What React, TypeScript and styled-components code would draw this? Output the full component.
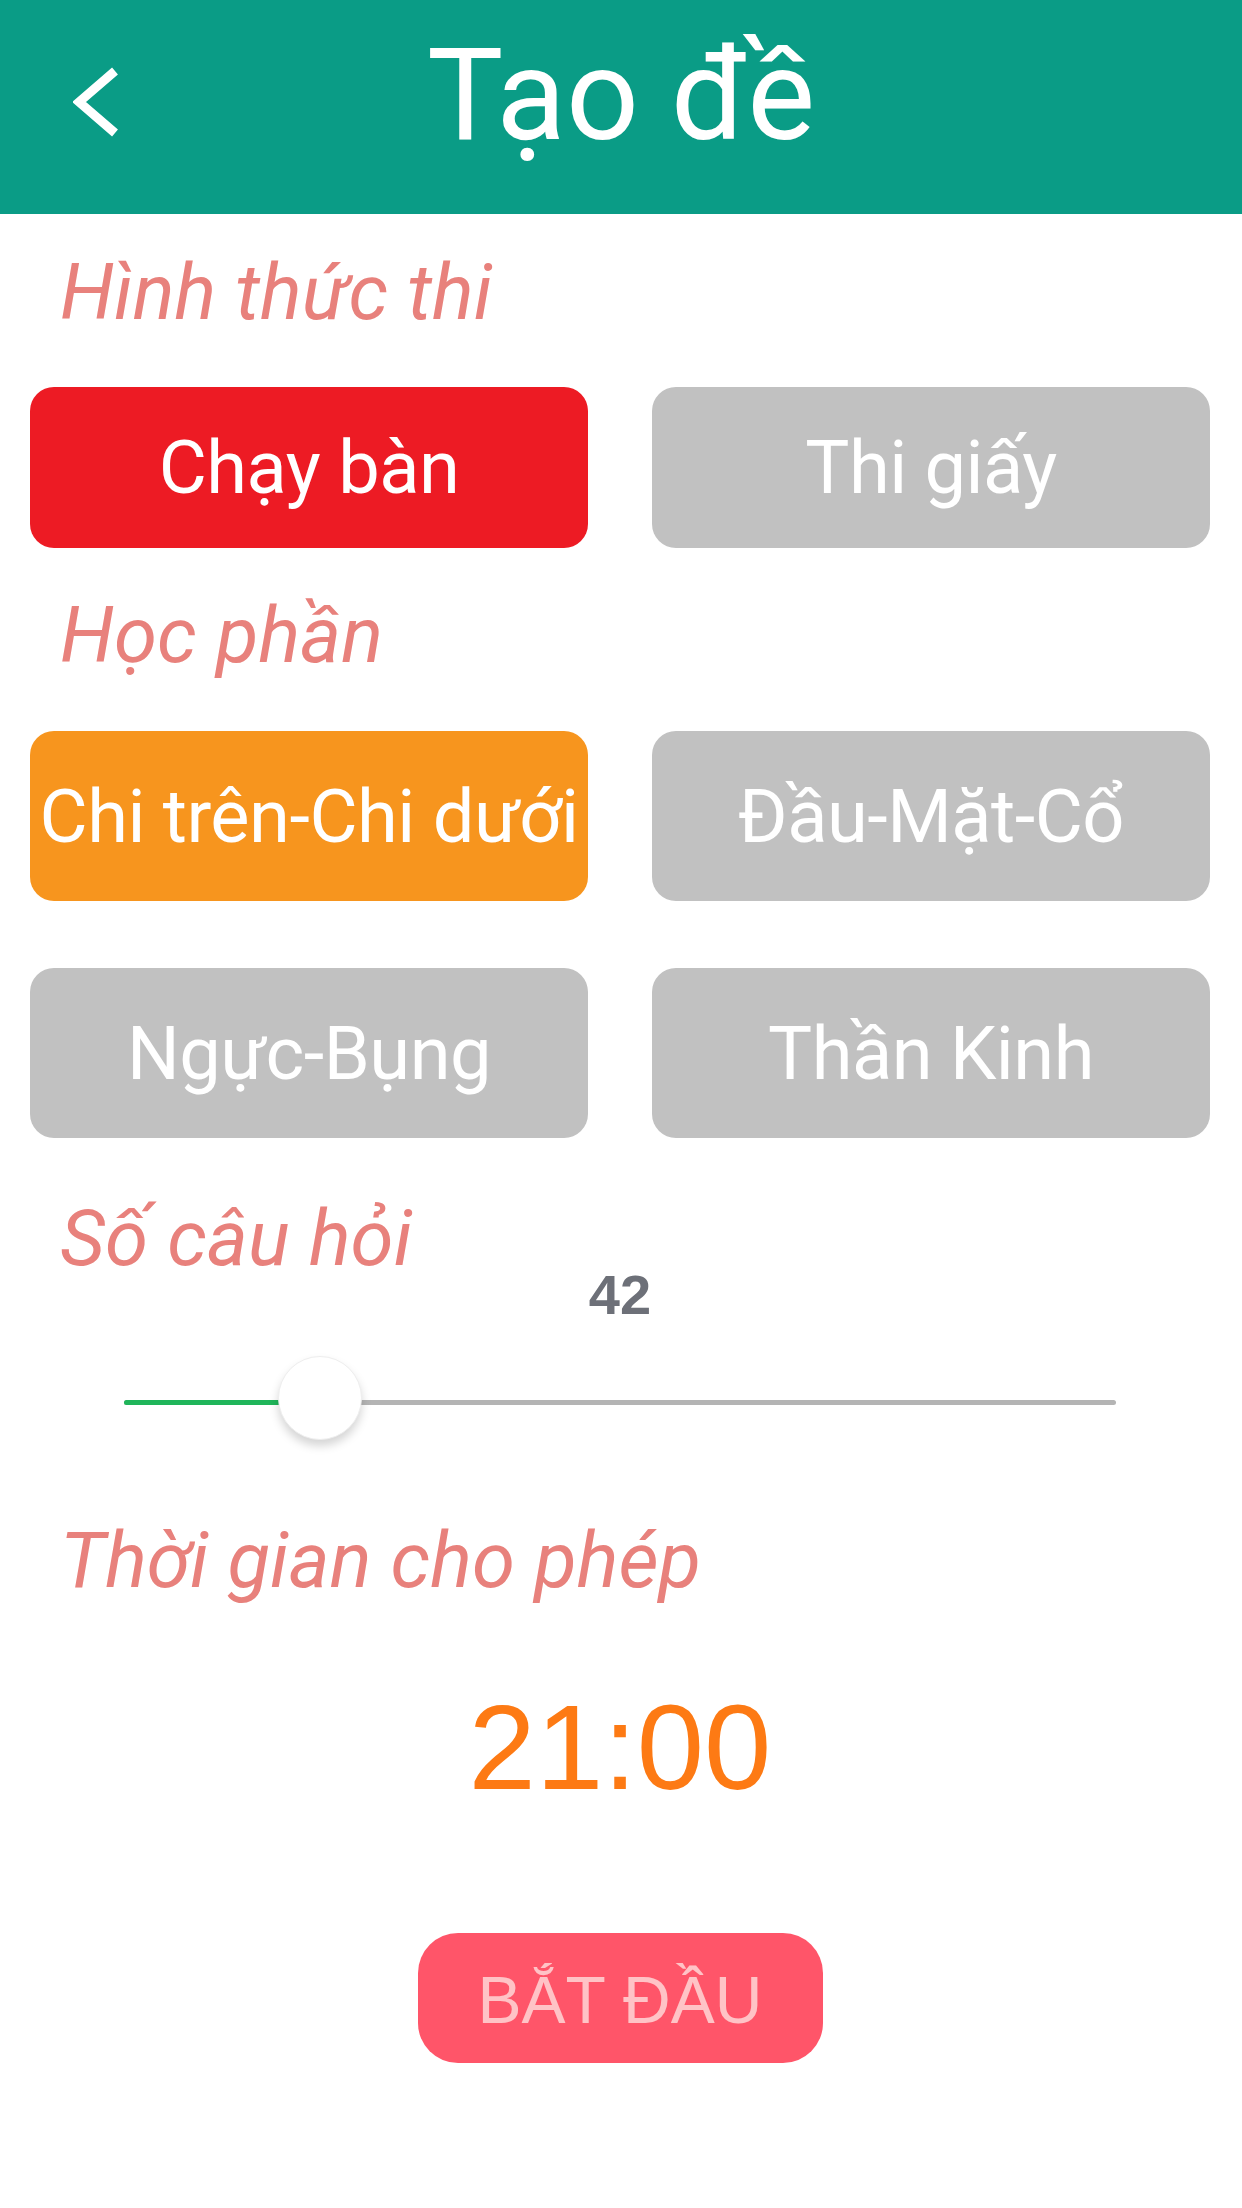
import React, { useState } from "react";
import styled, { createGlobalStyle } from "styled-components";

const GlobalStyle = createGlobalStyle`
  html, body {
    margin: 0;
    padding: 0;
    background: #ffffff;
  }
  body {
    font-family: Roboto, "Noto Sans", "Liberation Sans", sans-serif;
  }
  * {
    box-sizing: border-box;
  }
`;

type Tone = "red" | "orange" | "grey";

const toneColors: Record<Tone, string> = {
  red: "#ed1b24",
  orange: "#f7951e",
  grey: "#c1c1c1",
};

const Page = styled.div`
  width: 100%;
  min-height: 2208px;
  background: #ffffff;
`;

const Header = styled.header`
  height: 214px;
  background: #0a9c86;
  display: grid;
  grid-template-columns: 1fr auto 1fr;
  align-items: center;
  padding-bottom: 24px;
`;

const BackButton = styled.button`
  justify-self: start;
  margin: 14px 0 0 73px;
  padding: 0;
  border: none;
  background: transparent;
  display: flex;
  cursor: pointer;
`;

const Title = styled.h1`
  margin: 0;
  color: #ffffff;
  font-family: Roboto, "Noto Sans", sans-serif;
  font-weight: 400;
  font-size: 128px;
  line-height: 150px;
  white-space: nowrap;
`;

const Content = styled.main`
  padding: 0 32px 0 30px;
  display: flex;
  flex-direction: column;
`;

const SectionLabel = styled.h2<{ $top: number; $bottom: number }>`
  margin: ${(p) => p.$top}px 0 ${(p) => p.$bottom}px 30px;
  color: #e8817c;
  font-family: Roboto, "Noto Sans", sans-serif;
  font-style: italic;
  font-weight: 400;
  font-size: 78px;
  line-height: 96px;
  white-space: nowrap;
`;

const OptionGrid = styled.div<{ $rows: string; $rowGap: number }>`
  display: grid;
  grid-template-columns: 1fr 1fr;
  grid-template-rows: ${(p) => p.$rows};
  column-gap: 64px;
  row-gap: ${(p) => p.$rowGap}px;
`;

const OptionButton = styled.button<{ $tone: Tone }>`
  border: none;
  border-radius: 24px;
  background: ${(p) => toneColors[p.$tone]};
  color: #ffffff;
  font-family: Roboto, "Noto Sans", sans-serif;
  font-weight: 400;
  font-size: 74px;
  letter-spacing: -0.5px;
  white-space: nowrap;
  padding: 0;
  display: flex;
  align-items: center;
  justify-content: center;
  overflow: visible;
  cursor: pointer;
`;

const ValueLabel = styled.div`
  margin-top: -24px;
  text-align: center;
  color: #6d7078;
  font-family: "Liberation Sans", Arial, sans-serif;
  font-weight: 700;
  font-size: 56px;
  line-height: 64px;
`;

const SliderWrap = styled.div`
  position: relative;
  height: 84px;
  margin: 33px 94px 0 94px;
  display: flex;
  align-items: center;
`;

const Track = styled.div`
  position: relative;
  width: 100%;
  height: 5px;
  border-radius: 3px;
  background: #b4b4b4;
`;

const Fill = styled.div`
  height: 100%;
  border-radius: 3px;
  background: #20b55a;
`;

const Thumb = styled.div`
  position: absolute;
  top: -4px;
  width: 84px;
  height: 84px;
  margin-left: -42px;
  border-radius: 50%;
  background: #ffffff;
  border: 1px solid #eeeeee;
  box-shadow: 0 6px 10px rgba(0, 0, 0, 0.17);
`;

const TimeText = styled.div`
  margin-top: 72px;
  text-align: center;
  color: #fd7a14;
  font-family: "Liberation Sans", Arial, sans-serif;
  font-weight: 400;
  font-size: 121px;
  line-height: 132px;
`;

const StartButton = styled.button`
  align-self: center;
  margin-top: 120px;
  width: 405px;
  height: 130px;
  border: none;
  border-radius: 40px;
  background: #ff5569;
  color: #ffc3c6;
  font-family: "Liberation Sans", Arial, sans-serif;
  font-weight: 400;
  font-size: 66px;
  display: flex;
  align-items: center;
  justify-content: center;
  padding-top: 4px;
  cursor: pointer;
`;

const ChevronLeft = () => (
  <svg width="50" height="76" viewBox="0 0 50 76">
    <polyline
      points="42,7 6,38 42,69"
      fill="none"
      stroke="#ffffff"
      strokeWidth="9"
      strokeLinejoin="miter"
    />
  </svg>
);

const modes = ["Chạy bàn", "Thi giấy"];
const parts = ["Chi trên-Chi dưới", "Đầu-Mặt-Cổ", "Ngực-Bụng", "Thần Kinh"];

const MIN_Q = 10;
const MAX_Q = 172;

export default function App() {
  const [mode, setMode] = useState(0);
  const [part, setPart] = useState(0);
  const [questions] = useState(42);

  const percent = ((questions - MIN_Q) / (MAX_Q - MIN_Q)) * 100;

  return (
    <Page>
      <GlobalStyle />
      <Header>
        <BackButton aria-label="Quay lại">
          <ChevronLeft />
        </BackButton>
        <Title>Tạo đề</Title>
        <div />
      </Header>
      <Content>
        <SectionLabel $top={31} $bottom={46}>Hình thức thi</SectionLabel>
        <OptionGrid $rows="161px" $rowGap={0}>
          {modes.map((m, i) => (
            <OptionButton key={m} $tone={mode === i ? "red" : "grey"} onClick={() => setMode(i)}>
              {m}
            </OptionButton>
          ))}
        </OptionGrid>

        <SectionLabel $top={40} $bottom={47}>Học phần</SectionLabel>
        <OptionGrid $rows="170px 170px" $rowGap={67}>
          {parts.map((p, i) => (
            <OptionButton key={p} $tone={part === i ? "orange" : "grey"} onClick={() => setPart(i)}>
              {p}
            </OptionButton>
          ))}
        </OptionGrid>

        <SectionLabel $top={53} $bottom={0}>Số câu hỏi</SectionLabel>
        <ValueLabel>{questions}</ValueLabel>
        <SliderWrap>
          <Track>
            <Fill style={{ width: `${percent}%` }} />
          </Track>
          <Thumb style={{ left: `${percent}%` }} />
        </SliderWrap>

        <SectionLabel $top={69} $bottom={0}>Thời gian cho phép</SectionLabel>
        <TimeText>21:00</TimeText>

        <StartButton>BẮT ĐẦU</StartButton>
      </Content>
    </Page>
  );
}
